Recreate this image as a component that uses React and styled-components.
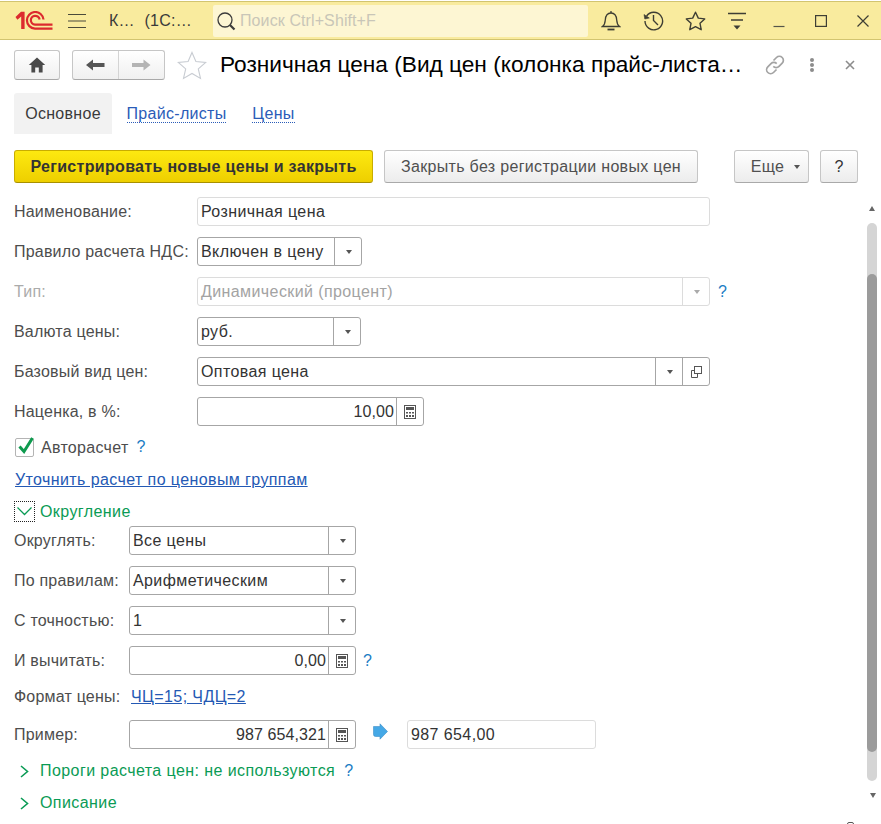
import React from 'react'
import styled, { createGlobalStyle } from 'styled-components'

const Global = createGlobalStyle`
html, body { margin: 0; padding: 0; background: #fff; }
body { font-family: "Liberation Sans", Arial, sans-serif; font-size: 16px; letter-spacing: 0.3px; color: #333; }
`

const Page = styled.div`
position: relative;
width: 881px;
height: 824px;
overflow: hidden;
background: #fff;
`
const Header = styled.header`
display: flex;
align-items: center;
height: 37px;
margin-top: 1px;
background: #f9eb9e;
border-top: 1px solid #d2c470;
border-bottom: 1px solid #d2c470;
`
const Logo = styled.svg`
width: 38px;
height: 19px;
margin-left: 15px;
flex: none;
`
const MenuIcon = styled.svg`
width: 18px;
height: 16px;
margin-left: 15px;
flex: none;
`
const AppTitle = styled.div`
width: 104px;
margin-left: 23px;
flex: none;
white-space: pre;
color: #3a3a3a;
`
const Search = styled.div`
display: flex;
align-items: center;
width: 375px;
height: 32px;
border-radius: 2px;
background: #fdf6d3;
color: #c9c6b8;
letter-spacing: 0.1px;
flex: none;
`
const SearchIcon = styled.svg`
width: 20px;
height: 20px;
margin: 0 4px 0 3px;
flex: none;
`
const HeadCell = styled.div`
display: flex;
align-items: center;
justify-content: center;
width: 42px;
height: 100%;
flex: none;
margin-left: ${(props) => props.$first ? "2px" : "0"};
`
const TopBar = styled.div`
display: flex;
align-items: center;
height: 30px;
margin-top: 10px;
padding-left: 14px;
`
const IconButton = styled.button`
display: flex;
align-items: center;
justify-content: center;
box-sizing: border-box;
width: ${(props) => props.$w}px;
height: 30px;
padding: 0;
margin-left: ${(props) => props.$ml || 0}px;
border: 1px solid #c6c6c6;
border-bottom-color: #a9a9a9;
border-radius: 3px;
background: linear-gradient(#ffffff, #f0f0f0);
`
const NavGroup = styled.div`
display: flex;
margin-left: 12px;
box-sizing: border-box;
width: 93px;
height: 30px;
border: 1px solid #c6c6c6;
border-bottom-color: #a9a9a9;
border-radius: 3px;
background: linear-gradient(#ffffff, #f0f0f0);
`
const NavCell = styled.div`
display: flex;
align-items: center;
justify-content: center;
flex: 1;
border-left: ${(props) => props.$split ? "1px solid #d4d4d4" : "none"};
`
const FavStar = styled.svg`
width: 30px;
height: 29px;
margin-left: 12px;
flex: none;
`
const Title = styled.h1`
width: 535px;
margin: 0 0 2px 13px;
font-size: 22.67px;
font-weight: 400;
letter-spacing: 0;
color: #000;
white-space: nowrap;
`
const TitleIcon = styled.svg`
flex: none;
margin-left: ${(props) => props.$ml}px;
`
const Tabs = styled.nav`
display: flex;
height: 41px;
margin-top: 13px;
padding-left: 14px;
`
const Tab = styled.a`
display: flex;
align-items: center;
justify-content: center;
width: ${(props) => props.$w}px;
margin-left: ${(props) => props.$ml || 0}px;
border-radius: 3px 3px 0 0;
background: ${(props) => props.$active ? "#f2f2f2" : "transparent"};
color: ${(props) => props.$active ? "#3a3a3a" : "#2a5cb8"};
span {
  border-bottom: ${(props) => props.$active ? "none" : "1px dotted #2a5cb8"};
  line-height: 17px;
}
`
const CommandBar = styled.div`
display: flex;
height: 33px;
margin-top: 16px;
padding-left: 14px;
`
const Command = styled.button`
display: flex;
align-items: center;
justify-content: center;
box-sizing: border-box;
width: ${(props) => props.$w}px;
margin-left: ${(props) => props.$ml || 0}px;
padding: 0 0 0 ${(props) => props.$pl || 0}px;
font: ${(props) => props.$primary ? "bold" : "normal"} 16px "Liberation Sans", Arial, sans-serif;
letter-spacing: 0.32px;
color: ${(props) => props.$primary || props.$dark ? "#333" : "#505050"};
border: 1px solid ${(props) => props.$primary ? "#c9ad00" : "#c6c6c6"};
border-bottom-color: ${(props) => props.$primary ? "#a89000" : "#a9a9a9"};
border-radius: 3px;
background: ${(props) => props.$primary
    ? "linear-gradient(#fde910, #eecf00)"
    : "linear-gradient(#ffffff, #ececec)"};
`
const Caret = styled.span`
width: 0;
height: 0;
margin-left: ${(props) => props.$ml || 10}px;
border-left: 3px solid transparent;
border-right: 3px solid transparent;
border-top: 4px solid ${(props) => props.$muted ? "#aaa" : "#555"};
`
const Body = styled.div`
display: flex;
margin-top: 14px;
`
const Form = styled.main`
width: 867px;
flex: none;
padding-left: 14px;
box-sizing: border-box;
`
const Row = styled.div`
display: flex;
align-items: center;
height: ${(props) => props.$h || 29}px;
margin-top: ${(props) => props.$mt ?? 11}px;
padding-left: ${(props) => props.$pl || 0}px;
`
const Label = styled.label`
width: ${(props) => props.$w}px;
flex: none;
white-space: nowrap;
letter-spacing: 0.2px;
color: ${(props) => props.$muted ? "#ababab" : "#4d4d4d"};
`
const Field = styled.div`
display: flex;
box-sizing: border-box;
width: ${(props) => props.$w}px;
height: 29px;
flex: none;
margin-left: ${(props) => props.$ml || 0}px;
border: 1px solid ${(props) => props.$soft ? "#dcdcdc" : "#a6a6a6"};
border-radius: 3px;
background: #fff;
`
const Value = styled.div`
flex: 1;
min-width: 0;
padding: 0 ${(props) => props.$right ? "2px" : "0"} 0 3px;
line-height: 27px;
letter-spacing: ${(props) => props.$right ? "0.1px" : "0.4px"};
text-align: ${(props) => props.$right ? "right" : "left"};
white-space: nowrap;
color: ${(props) => props.$muted ? "#a3a3a3" : "#333"};
`
const Cell = styled.div`
display: flex;
align-items: center;
justify-content: center;
width: 26px;
flex: none;
border-left: 1px solid ${(props) => props.$soft ? "#dcdcdc" : "#a6a6a6"};
`
const Help = styled.span`
margin-left: ${(props) => props.$ml}px;
color: #1a7cc4;
font-size: 16px;
`
const CheckBox = styled.span`
position: relative;
display: block;
box-sizing: border-box;
width: 19px;
height: 19px;
margin-left: 1px;
margin-top: 1px;
border: 1px solid #b4b4b4;
border-radius: 2px;
`
const CheckMark = styled.svg`
position: absolute;
left: 1px;
top: -4px;
`
const CheckText = styled.span`
margin-left: 7px;
padding-top: 1px;
color: #4d4d4d;
`
const Link = styled.a`
margin-left: ${(props) => props.$ml || 1}px;
color: #2459b4;
letter-spacing: 0.4px;
text-decoration: underline;
`
const GroupHead = styled.div`
display: flex;
align-items: center;
height: ${(props) => props.$h || 21}px;
margin-top: ${(props) => props.$mt}px;
padding-left: ${(props) => props.$pl || 0}px;
letter-spacing: 0.42px;
color: #0a9b55;
`
const Expander = styled.span`
display: flex;
align-items: center;
justify-content: center;
box-sizing: border-box;
width: 21px;
height: 21px;
margin-right: 5px;
border: 1px dotted #222;
`
const RightChevron = styled.svg`
flex: none;
margin-right: 11px;
`
const Flow = styled.svg`
flex: none;
margin: -6px 19px 0 17px;
`
const Rail = styled.aside`
display: flex;
flex-direction: column;
align-items: center;
width: 10px;
padding-top: 9px;
`
const RailArrow = styled.span`
width: 0;
height: 0;
margin-left: ${(props) => props.$ml || 0}px;
border-left: 3px solid transparent;
border-right: 3px solid transparent;
border-${(props) => props.$down ? "top" : "bottom"}: 5px solid #666;
`
const Track = styled.div`
width: 10px;
height: 558px;
margin: 12px 0;
padding-top: 51px;
box-sizing: border-box;
border-radius: 5px;
background: #d5d5d5;
`
const Thumb = styled.div`
height: 478px;
border-radius: 5px;
background: #9b9b9b;
`
const ClippedHandle = styled.div`
position: absolute;
left: 847px;
top: 822px;
width: 5px;
height: 6px;
border: 1px solid #555;
border-radius: 2px;
`

const Calc = () => (
  <svg width="14" height="16" viewBox="0 0 14 16">
    <rect x="1.5" y="1.5" width="11" height="13" fill="#fff" stroke="#555" />
    <rect x="3" y="3" width="8" height="3" fill="#555" />
    <path d="M3 8h2v1.6H3zM6 8h2v1.6H6zM9 8h2v1.6H9zM3 11h2v2H3zM6 11h2v2H6zM9 11h2v2H9z" fill="#555" />
  </svg>
)

const Select = ({ w, value, muted, soft, extra }) => (
  <Field $w={w} $soft={soft}>
    <Value $muted={muted}>{value}</Value>
    <Cell $soft={soft}><Caret $ml={1} $muted={muted} /></Cell>
    {extra && (
      <Cell>
        <svg width="14" height="14" viewBox="0 0 14 14" fill="none" stroke="#555">
          <rect x="5.5" y="1.5" width="7" height="7" />
          <path d="M5.5 5.5H2.5V12.5H8.5V8.5" />
        </svg>
      </Cell>
    )}
  </Field>
)

const NumberField = ({ w, value }) => (
  <Field $w={w}>
    <Value $right>{value}</Value>
    <Cell><Calc /></Cell>
  </Field>
)

function App() {
  return (
    <Page>
      <Global />
      <Header>
        <Logo viewBox="0 0 38 19" fill="none">
          <path d="M0.5 6 L6 0.8 H9.6 V18 H6.2 V5.6 L2.4 8.8 Z" fill="#dc2a2e" />
          <path d="M28.5 8.5 A8.3 8.3 0 1 0 20 17.6 H37.5" stroke="#dc2a2e" strokeWidth="2.2" />
          <path d="M24.6 8.5 A4.4 4.4 0 1 0 20 13.6 H37.5" stroke="#dc2a2e" strokeWidth="2.2" />
        </Logo>
        <MenuIcon viewBox="0 0 18 16" stroke="#4a4a3a" strokeWidth="1.2">
          <path d="M0 1.5H18M0 8H18M0 14.5H18" />
        </MenuIcon>
        <AppTitle>К…  (1С:…</AppTitle>
        <Search>
          <SearchIcon viewBox="0 0 20 20" fill="none" stroke="#3c3c3c">
            <circle cx="9" cy="9" r="7" strokeWidth="1.3" />
            <path d="M14 14l4.5 4.5" strokeWidth="2.2" />
          </SearchIcon>
          Поиск Ctrl+Shift+F
        </Search>
        <HeadCell $first>
          <svg width="20" height="21" viewBox="0 0 20 21" fill="none" stroke="#3e3e34" strokeWidth="1.3">
            <path d="M1.5 16.5c2-1.6 2.6-3.4 2.8-6.5C4.600 5.500 6.500 3 10 3s5.400 2.500 5.700 7c.2 3.100.8 4.900 2.800 6.500z" />
            <path d="M10 1v2" />
            <path d="M6.500 19.500h7" strokeWidth="1.800" />
          </svg>
        </HeadCell>
        <HeadCell>
          <svg width="21" height="21" viewBox="0 0 21 21" fill="none" stroke="#3e3e34" strokeWidth="1.4">
            <path d="M3.600 6A8.800 8.800 0 1 1 2 11" />
            <path d="M1 4.500l.8 4.500 4.500-1z" fill="#3e3e34" strokeWidth="0.6" />
            <path d="M10.500 5v5.500l4.500 4.500" />
          </svg>
        </HeadCell>
        <HeadCell>
          <svg width="21" height="20" viewBox="0 0 21 20" fill="none" stroke="#3e3e34" strokeWidth="1.4" strokeLinejoin="round">
            <path d="M10.500 1.200l2.800 5.900 6.400.8-4.700 4.400 1.200 6.400-5.700-3.100-5.700 3.100 1.200-6.400L1.300 7.900l6.400-.8z" />
          </svg>
        </HeadCell>
        <HeadCell>
          <svg width="19" height="18" viewBox="0 0 19 18" stroke="#3e3e34" strokeWidth="1.3">
            <path d="M0 1.500H18M3 8H15" />
            <path d="M5.500 13.500h7L9 17.500z" fill="#3e3e34" stroke="none" />
          </svg>
        </HeadCell>
        <HeadCell>
          <svg width="12" height="22" viewBox="0 0 12 22" stroke="#55554a" strokeWidth="1.2">
            <path d="M0.500 16.500H11.500" />
          </svg>
        </HeadCell>
        <HeadCell>
          <svg width="12" height="12" viewBox="0 0 12 12" fill="none" stroke="#3e3e34" strokeWidth="1.2">
            <rect x="0.600" y="0.600" width="10.800" height="10.800" />
          </svg>
        </HeadCell>
        <HeadCell>
          <svg width="12" height="12" viewBox="0 0 12 12" stroke="#3e3e34" strokeWidth="1.2">
            <path d="M0.500 0.500L11.500 11.500M11.500 0.500L0.500 11.500" />
          </svg>
        </HeadCell>
      </Header>

      <TopBar>
        <IconButton $w={46}>
          <svg width="18" height="16" viewBox="0 0 18 16" fill="#4a4a4a">
            <path d="M9 0.500L0.800 8H3.400V15.500H7.200V10.500H10.800V15.500H14.600V8H17.200Z" />
          </svg>
        </IconButton>
        <NavGroup>
          <NavCell>
            <svg width="19" height="12" viewBox="0 0 19 12" fill="#555">
              <path d="M0 6L7 0.500V4H18.500V8H7V11.500Z" />
            </svg>
          </NavCell>
          <NavCell $split>
            <svg width="19" height="12" viewBox="0 0 19 12" fill="#b4b4b4">
              <path d="M18.500 6L11.500 0.500V4H0V8H11.500V11.500Z" />
            </svg>
          </NavCell>
        </NavGroup>
        <FavStar viewBox="0 0 30 29" fill="#fff" stroke="#c8ccd2" strokeWidth="1.100">
          <path d="M15 1.500l3.900 9 9.800.9-7.400 6.500 2.200 9.600L15 22.500l-8.500 5 2.200-9.600-7.400-6.500 9.800-.9z" />
        </FavStar>
        <Title>Розничная цена (Вид цен (колонка прайс-листа…</Title>
        <TitleIcon $ml={10} width="20" height="20" viewBox="0 0 20 20" fill="none" stroke="#a3a3a3" strokeWidth="1.700">
          <path d="M8.500 5.500l3-3a4 4 0 0 1 5.700 5.700l-3.200 3.200a4 4 0 0 1-5.700 0" />
          <path d="M11.500 14.500l-3 3a4 4 0 0 1-5.700-5.700L6 8.600a4 4 0 0 1 5.700 0" />
        </TitleIcon>
        <TitleIcon $ml={24} width="6" height="14" viewBox="0 0 6 14" fill="#8c8c8c">
          <circle cx="3" cy="2" r="2" />
          <circle cx="3" cy="7" r="2" />
          <circle cx="3" cy="12" r="2" />
        </TitleIcon>
        <TitleIcon $ml={30} width="10" height="10" viewBox="0 0 10 10" stroke="#8c8c8c" strokeWidth="1.600">
          <path d="M1 1L9 9M9 1L1 9" />
        </TitleIcon>
      </TopBar>

      <Tabs>
        <Tab $w={98} $active><span>Основное</span></Tab>
        <Tab $w={101} $ml={14}><span>Прайс-листы</span></Tab>
        <Tab $w={43} $ml={25}><span>Цены</span></Tab>
      </Tabs>

      <CommandBar>
        <Command $w={359} $primary>Регистрировать новые цены и закрыть</Command>
        <Command $w={314} $ml={11}>Закрыть без регистрации новых цен</Command>
        <Command $w={75} $ml={36} $pl={8}>Еще<Caret /></Command>
        <Command $w={38} $ml={11} $dark>?</Command>
      </CommandBar>

      <Body>
        <Form>
          <Row $mt={0}>
            <Label $w={183}>Наименование:</Label>
            <Field $w={513} $soft><Value>Розничная цена</Value></Field>
          </Row>
          <Row>
            <Label $w={183}>Правило расчета НДС:</Label>
            <Select w={165} value="Включен в цену" />
          </Row>
          <Row>
            <Label $w={183} $muted>Тип:</Label>
            <Select w={513} value="Динамический (процент)" muted soft />
            <Help $ml={8}>?</Help>
          </Row>
          <Row>
            <Label $w={183}>Валюта цены:</Label>
            <Select w={164} value="руб." />
          </Row>
          <Row>
            <Label $w={183}>Базовый вид цен:</Label>
            <Select w={513} value="Оптовая цена" extra />
          </Row>
          <Row>
            <Label $w={183}>Наценка, в %:</Label>
            <NumberField w={227} value="10,00" />
          </Row>
          <Row $h={20}>
            <CheckBox>
              <CheckMark width="19" height="21" viewBox="0 0 19 21" fill="none" stroke="#0e9a4e" strokeWidth="3">
                <path d="M2.500 11.500l4.500 5L15.500 3" />
              </CheckMark>
            </CheckBox>
            <CheckText>Авторасчет</CheckText>
            <Help $ml={8}>?</Help>
          </Row>
          <Row $h={21} $mt={12}>
            <Link>Уточнить расчет по ценовым группам</Link>
          </Row>
          <GroupHead $mt={11}>
            <Expander>
              <svg width="15" height="9" viewBox="0 0 15 9" fill="none" stroke="#0a9b55" strokeWidth="1.300">
                <path d="M0.500 0.500L7.500 7.500L14.500 0.500" />
              </svg>
            </Expander>
            Округление
          </GroupHead>
          <Row $mt={4}>
            <Label $w={115}>Округлять:</Label>
            <Select w={227} value="Все цены" />
          </Row>
          <Row>
            <Label $w={115}>По правилам:</Label>
            <Select w={227} value="Арифметическим" />
          </Row>
          <Row>
            <Label $w={115}>С точностью:</Label>
            <Select w={227} value="1" />
          </Row>
          <Row>
            <Label $w={115}>И вычитать:</Label>
            <NumberField w={227} value="0,00" />
            <Help $ml={7}>?</Help>
          </Row>
          <Row $h={22} $mt={11}>
            <Label $w={116}>Формат цены:</Label>
            <Link>ЧЦ=15; ЧДЦ=2</Link>
          </Row>
          <Row $mt={12}>
            <Label $w={115}>Пример:</Label>
            <NumberField w={227} value="987 654,321" />
            <Flow width="15" height="17" viewBox="0 0 15 17" fill="#45a8e6" stroke="#3c8fc8" strokeWidth="0.600">
              <path d="M0.500 3.500H7V0.800L14.500 8.500L7 16.200V13.500H2.500Q0.500 13.500 0.500 11.500Z" />
            </Flow>
            <Field $w={189} $soft><Value>987 654,00</Value></Field>
          </Row>
          <GroupHead $mt={11} $h={22} $pl={6}>
            <RightChevron width="9" height="13" viewBox="0 0 9 13" fill="none" stroke="#0a9b55" strokeWidth="1.600">
              <path d="M1 1L7.500 6.500L1 12" />
            </RightChevron>
            Пороги расчета цен: не используются
            <Help $ml={9}>?</Help>
          </GroupHead>
          <GroupHead $mt={10} $h={22} $pl={6}>
            <RightChevron width="9" height="13" viewBox="0 0 9 13" fill="none" stroke="#0a9b55" strokeWidth="1.600">
              <path d="M1 1L7.500 6.500L1 12" />
            </RightChevron>
            Описание
          </GroupHead>
        </Form>
        <Rail>
          <RailArrow />
          <Track><Thumb /></Track>
          <RailArrow $down $ml={2} />
        </Rail>
      </Body>
      <ClippedHandle />
    </Page>
  )
}

export default App
